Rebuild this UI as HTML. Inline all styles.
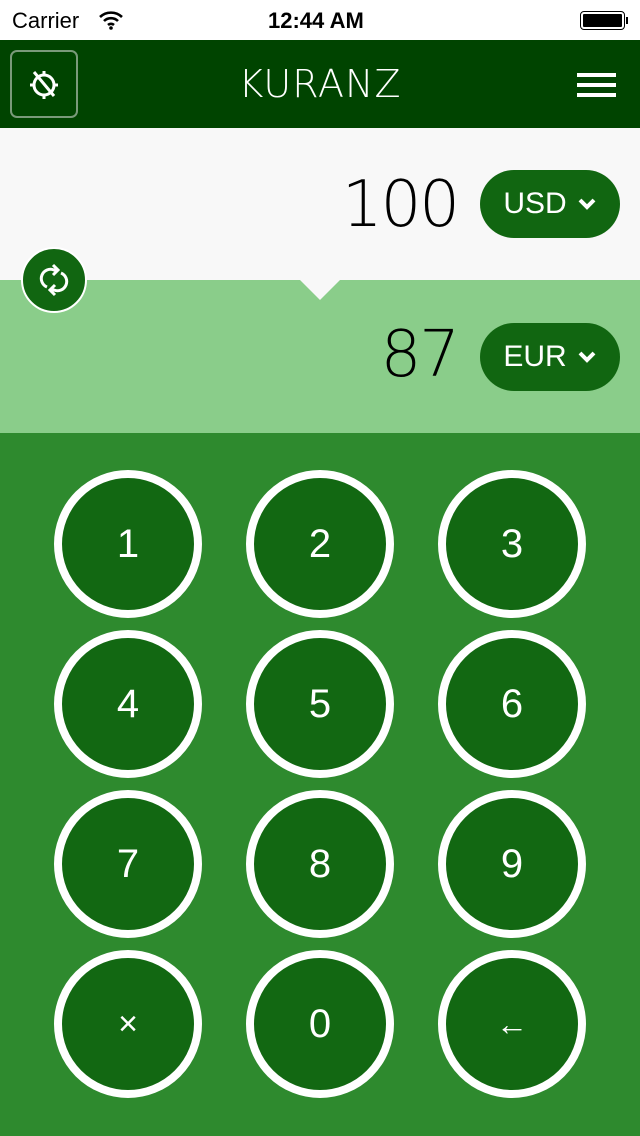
<!DOCTYPE html>
<html><head><meta charset="utf-8"><style>
*{margin:0;padding:0;box-sizing:border-box}
body{width:640px;height:1136px;overflow:hidden;font-family:"Liberation Sans",sans-serif;background:#2e8a2e;position:relative}
.abs{position:absolute}
.status{top:0;left:0;width:640px;height:40px;background:#fff;font-size:22px;color:#000}
.hdr{top:40px;left:0;width:640px;height:88px;background:#004400}
.top{top:128px;left:0;width:640px;height:152px;background:#f8f8f8}
.mid{top:280px;left:0;width:640px;height:153px;background:#8acd8a}
.pill{width:140px;height:68px;border-radius:34px;background:#116611;color:#fff;font-size:30px;display:flex;align-items:center;justify-content:center;gap:10px}
.num{font-family:"DejaVu Sans",sans-serif;font-weight:200;color:#000;font-size:64px;text-align:right;letter-spacing:-2px}
.key{width:148px;height:148px;border-radius:50%;border:8px solid #fff;background:#126812;color:#fff;font-size:40px;display:flex;align-items:center;justify-content:center}
</style></head><body>
<div class="abs status">
 <div class="abs" style="left:12px;top:8px">Carrier</div>
 <svg class="abs" style="left:98px;top:10px" width="26" height="20" viewBox="0 0 26 20"><path d="M2 7a16 16 0 0 1 22 0M6 11a10 10 0 0 1 14 0M10 15a4.5 4.5 0 0 1 6 0" stroke="#000" stroke-width="2.6" fill="none"/><circle cx="13" cy="18" r="1.8"/></svg>
 <div class="abs" style="left:268px;top:8px;font-weight:bold">12:44 AM</div>
 <div class="abs" style="left:580px;top:11px;width:45px;height:19px;border:1.5px solid #000;border-radius:4px;padding:2px"><div style="background:#000;width:100%;height:100%;border-radius:1px"></div></div>
 <div class="abs" style="left:626px;top:17px;width:2px;height:7px;background:#000"></div>
</div>
<div class="abs hdr">
 <div class="abs" style="left:10px;top:10px;width:68px;height:68px;border:2px solid #7a9a7a;border-radius:7px"></div>
 <svg class="abs" style="left:26px;top:26px" width="36" height="36" viewBox="0 0 36 36" stroke="#fff" stroke-width="3" fill="none"><circle cx="18" cy="19" r="10"/><path d="M18 5v4M18 29v4M4 19h4M28 19h4M8 6l20 24"/></svg>
 <div class="abs" style="left:0;width:640px;top:22px;text-align:center;color:#fff;font-size:38px;font-family:'DejaVu Sans',sans-serif;font-weight:200;letter-spacing:1px">KURANZ</div>
 <div class="abs" style="left:577px;top:33px;width:39px;height:4px;background:#fff"></div>
 <div class="abs" style="left:577px;top:43px;width:39px;height:4px;background:#fff"></div>
 <div class="abs" style="left:577px;top:53px;width:39px;height:4px;background:#fff"></div>
</div>
<div class="abs top">
 <div class="abs num" style="right:182px;top:40px">100</div>
 <div class="abs pill" style="left:480px;top:42px">USD<svg width="20" height="14" viewBox="0 0 20 14"><path d="M3 3l7 7 7-7" stroke="#fff" stroke-width="4" fill="none"/></svg></div>
</div>
<div class="abs mid">
 <div class="abs num" style="right:182px;top:38px">87</div>
 <div class="abs pill" style="left:480px;top:43px">EUR<svg width="20" height="14" viewBox="0 0 20 14"><path d="M3 3l7 7 7-7" stroke="#fff" stroke-width="4" fill="none"/></svg></div>
</div>
<div class="abs" style="left:300px;top:280px;width:0;height:0;border-left:20px solid transparent;border-right:20px solid transparent;border-top:20px solid #f8f8f8"></div>
<div class="abs" style="left:21px;top:247px;width:66px;height:66px;border-radius:50%;background:#116611;border:2px solid #fff"></div>
<svg class="abs" style="left:38px;top:262px" width="32" height="36" viewBox="0 0 32 36" stroke="#fff" stroke-width="3" fill="none"><path d="M9 25A9 9 0 0 1 16 8h3M23 11a9 9 0 0 1-7 17h-3"/><path d="M15 3l5 5-5 5M17 23l-5 5 5 5"/></svg>
<div class="abs" style="top:433px;left:0;width:640px;height:703px">
 <div class="abs key" style="left:54px;top:37px">1</div>
 <div class="abs key" style="left:246px;top:37px">2</div>
 <div class="abs key" style="left:438px;top:37px">3</div>
 <div class="abs key" style="left:54px;top:197px">4</div>
 <div class="abs key" style="left:246px;top:197px">5</div>
 <div class="abs key" style="left:438px;top:197px">6</div>
 <div class="abs key" style="left:54px;top:357px">7</div>
 <div class="abs key" style="left:246px;top:357px">8</div>
 <div class="abs key" style="left:438px;top:357px">9</div>
 <div class="abs key" style="left:54px;top:517px;font-size:34px">×</div>
 <div class="abs key" style="left:246px;top:517px">0</div>
 <div class="abs key" style="left:438px;top:517px;font-size:32px">←</div>
</div>
</body></html>
